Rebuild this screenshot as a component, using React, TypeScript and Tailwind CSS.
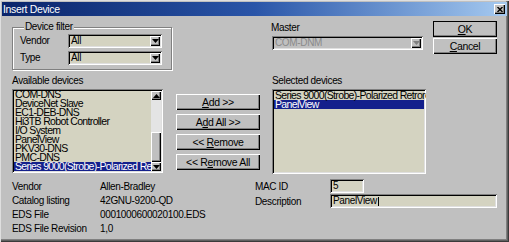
import React from "react";

const font = "font-['Liberation_Sans',Arial,sans-serif] tracking-[-0.35px]";
const sunken =
  "shadow-[inset_1px_1px_0_#808080,inset_-1px_-1px_0_#fff,inset_2px_2px_0_#000,inset_-2px_-2px_0_#dfdfdf]";
const raised =
  "bg-[#c0c0c0] shadow-[inset_1px_1px_0_#fff,inset_-1px_-1px_0_#000,inset_-2px_-2px_0_#808080]";

function Arrow({ up, color = "#000" }: { up?: boolean; color?: string }) {
  return (
    <svg width="7" height="4" viewBox="0 0 7 4">
      <path d={up ? "M3.5 0 L7 4 L0 4 Z" : "M0 0 L7 0 L3.5 4 Z"} fill={color} />
    </svg>
  );
}

function Combo({ value, width, disabled }: { value: string; width: string; disabled?: boolean }) {
  return (
    <div
      className={`${width} h-[14px] ${sunken} ${disabled ? "bg-[#c0c0c0] text-[#8a8a8a]" : "bg-[#d4d3c1]"} flex items-center pl-[3px] pr-[2px]`}
    >
      <span className="flex-1 leading-[10px]">{value}</span>
      <div className={`w-[10px] h-[10px] ${raised} flex items-center justify-center`}>
        <Arrow color={disabled ? "#808080" : "#000"} />
      </div>
    </div>
  );
}

function Btn({ children, width, isDefault }: { children: React.ReactNode; width: string; isDefault?: boolean }) {
  return (
    <div
      className={`${width} h-[16px] ${raised} ${isDefault ? "outline outline-1 outline-black -outline-offset-1" : ""} flex items-center justify-center leading-[10px] text-[10.5px]`}
    >
      <span className="whitespace-pre">{children}</span>
    </div>
  );
}

function Item({ text, selected }: { text: string; selected?: boolean }) {
  return (
    <div
      className={`h-[9px] leading-[9px] px-[1px] whitespace-nowrap text-[10.5px] tracking-[-0.65px] ${selected ? "bg-[#14208c] text-white" : ""}`}
    >
      {text}
    </div>
  );
}

function Scrollbar() {
  return (
    <div className="w-[10px] flex flex-col">
      <div className={`h-[9px] ${raised} flex items-center justify-center`}>
        <Arrow up />
      </div>
      <div className="h-[32px] bg-[#e4e4e4]" />
      <div className={`h-[30px] ${raised}`} />
      <div className={`h-[9px] ${raised} flex items-center justify-center`}>
        <Arrow />
      </div>
    </div>
  );
}

const available = [
  "COM-DNS",
  "DeviceNet Slave",
  "EC1-DEB-DNS",
  "Hi3TB Robot Controller",
  "I/O System",
  "PanelView",
  "PKV30-DNS",
  "PMC-DNS",
];

const details = [
  ["Vendor", "Allen-Bradley"],
  ["Catalog listing", "42GNU-9200-QD"],
  ["EDS File", "0001000600020100.EDS"],
  ["EDS File Revision", "1,0"],
];

export default function App() {
  return (
    <div
      className={`w-[509px] h-[242px] bg-[#c0c0c0] text-[10px] text-black ${font} p-[2px] shadow-[inset_1px_1px_0_#dfdfdf,inset_-1px_-1px_0_#3a3a3a,inset_-2px_-2px_0_#606060,inset_-3px_-3px_0_#808080] overflow-hidden`}
    >
      {/* Title bar */}
      <div className="h-[14px] bg-gradient-to-r from-[#0a246a] via-[#2a55a8] to-[#a6caf0] flex items-center pl-[1px] pr-[2px]">
        <span className="flex-1 text-white text-[10.5px] leading-[12px]">Insert Device</span>
        <div className={`w-[11px] h-[10px] ${raised} flex items-center justify-center`}>
          <svg width="6" height="5" viewBox="0 0 6 5">
            <path d="M0.5 0 L5.5 5 M5.5 0 L0.5 5" stroke="#000" strokeWidth="1.4" />
          </svg>
        </div>
      </div>

      {/* Top row */}
      <div className="flex items-start pl-[10px] h-[56px]">
        <fieldset className="mt-[6px] w-[160px] h-[48px] border border-[#808080] shadow-[inset_1px_1px_0_#fff,1px_1px_0_#fff] pl-[7px]">
          <legend className="ml-[4px] px-[1px] leading-[10px] bg-[#c0c0c0]">Device filter</legend>
          <div className="flex flex-col gap-[2px] mt-[1px]">
            <div className="flex items-center">
              <span className="w-[48px]">Vendor</span>
              <Combo value="All" width="w-[94px]" />
            </div>
            <div className="flex items-center">
              <span className="w-[48px]">Type</span>
              <Combo value="All" width="w-[94px]" />
            </div>
          </div>
        </fieldset>

        <div className="ml-[99px] mt-[7px] flex flex-col">
          <span className="leading-[10px]">Master</span>
          <div className="mt-[3px] ml-[1px]">
            <Combo value="COM-DNM" width="w-[151px]" disabled />
          </div>
        </div>

        <div className="ml-[10px] mt-[5px] flex flex-col gap-[1px]">
          <Btn width="w-[64px]" isDefault>
            <span className="underline">O</span>K
          </Btn>
          <Btn width="w-[64px]">
            <span className="underline">C</span>ancel
          </Btn>
        </div>
      </div>

      {/* Lists row */}
      <div className="flex items-start pl-[10px] mt-[4px]">
        <div className="flex flex-col">
          <span className="leading-[10px]">Available devices</span>
          <div className={`mt-[3px] w-[151px] h-[84px] bg-[#d4d3c1] ${sunken} p-[2px] flex`}>
            <div className="flex-1 overflow-hidden">
              <div className="-mt-[1px]">
                {available.map((t) => (
                  <Item key={t} text={t} />
                ))}
                <Item text="Series 9000(Strobe)-Polarized Retroreflective" selected />
              </div>
            </div>
            <Scrollbar />
          </div>
        </div>

        <div className="ml-[13px] mt-[18px] flex flex-col gap-[4px]">
          <Btn width="w-[84px]">
            <span className="underline">A</span>dd &gt;&gt;
          </Btn>
          <Btn width="w-[84px]">
            A<span className="underline">d</span>d All &gt;&gt;
          </Btn>
          <Btn width="w-[84px]">
            {"<< "}
            <span className="underline">R</span>emove
          </Btn>
          <Btn width="w-[84px]">
            {"<< R"}
            <span className="underline">e</span>move All
          </Btn>
        </div>

        <div className="ml-[12px] flex flex-col">
          <span className="leading-[10px]">Selected devices</span>
          <div className={`mt-[3px] w-[154px] h-[85px] bg-[#d4d3c1] ${sunken} p-[2px] overflow-hidden`}>
            <Item text="Series 9000(Strobe)-Polarized Retroreflective" />
            <Item text="PanelView" selected />
          </div>
        </div>
      </div>

      {/* Details row */}
      <div className="flex items-start pl-[10px]">
        <div className="mt-[8px] w-[243px] grid grid-cols-[88px_1fr] gap-y-[4px] leading-[10px]">
          {details.map(([k, v]) => (
            <React.Fragment key={k}>
              <span>{k}</span>
              <span>{v}</span>
            </React.Fragment>
          ))}
        </div>
        <div className="mt-[5px] flex flex-col gap-[1px]">
          <div className="flex items-center h-[14px]">
            <span className="w-[75px]">MAC ID</span>
            <div className={`w-[34px] h-[14px] bg-[#d4d3c1] ${sunken} pl-[3px] leading-[14px]`}>5</div>
          </div>
          <div className="flex items-center h-[14px]">
            <span className="w-[75px]">Description</span>
            <div className={`w-[167px] h-[14px] bg-[#d4d3c1] ${sunken} pl-[3px] flex items-center`}>
              <span className="leading-[10px]">PanelView</span>
              <span className="w-[1px] h-[9px] bg-black ml-[1px]" />
            </div>
          </div>
        </div>
      </div>
    </div>
  );
}
